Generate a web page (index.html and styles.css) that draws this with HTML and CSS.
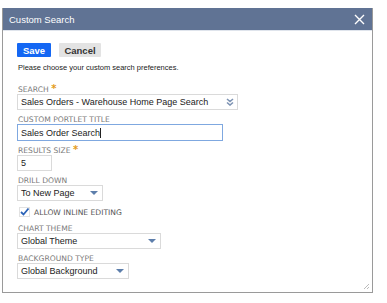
FILE: index.html
```html
<!DOCTYPE html>
<html lang="en">
<head>
    <meta charset="UTF-8">
    <title>Custom Search</title>
    <link rel="stylesheet" href="styles.css">
</head>
<body>
    <!-- Dialogo -->
    <div class="dialog">
        <div class="dialog-header">
            <span class="dialog-title">Custom Search</span>
            <svg class="close" width="11" height="11" viewBox="0 0 11 11">
                <path d="M1 1 L10 10 M10 1 L1 10" stroke="#fff" stroke-width="1.4"/>
            </svg>
        </div>

        <div class="dialog-body">
            <div class="actions">
                <button class="btn btn-save">Save</button>
                <button class="btn btn-cancel">Cancel</button>
            </div>
            <p class="intro">Please choose your custom search preferences.</p>

            <div class="field">
                <label>SEARCH <span class="req">*</span></label>
                <div class="select select-search">
                    <span>Sales Orders - Warehouse Home Page Search</span>
                    <svg width="8" height="8" viewBox="0 0 8 8">
                        <path d="M1 1 L4 3.5 L7 1 M1 4.5 L4 7 L7 4.5" fill="none" stroke="#7d93b3" stroke-width="1.6"/>
                    </svg>
                </div>
            </div>

            <div class="field">
                <label>CUSTOM PORTLET TITLE</label>
                <div class="input input-title">Sales Order Search<span class="caret"></span></div>
            </div>

            <div class="field">
                <label>RESULTS SIZE <span class="req">*</span></label>
                <div class="input input-size">5</div>
            </div>

            <div class="field">
                <label>DRILL DOWN</label>
                <div class="select select-drill">
                    <span>To New Page</span>
                    <i class="arrow"></i>
                </div>
            </div>

            <div class="check-row">
                <svg width="11" height="10" viewBox="0 0 11 10">
                    <rect x="0.5" y="0.5" width="10" height="9" fill="none" stroke="#e2e2e2"/>
                    <path d="M2 5 L4.5 7.5 L9.5 1.5" fill="none" stroke="#2d64b8" stroke-width="1.8"/>
                </svg>
                <span>ALLOW INLINE EDITING</span>
            </div>

            <div class="field">
                <label>CHART THEME</label>
                <div class="select select-chart">
                    <span>Global Theme</span>
                    <i class="arrow"></i>
                </div>
            </div>

            <div class="field">
                <label>BACKGROUND TYPE</label>
                <div class="select select-bg">
                    <span>Global Background</span>
                    <i class="arrow"></i>
                </div>
            </div>
        </div>

        <svg class="grip" width="7" height="7" viewBox="0 0 7 7">
            <path d="M6 1 L1 6 M6 4 L4 6" stroke="#aaa" stroke-width="0.8"/>
        </svg>
    </div>
</body>
</html>
```

FILE: styles.css
```css
body {
    margin: 0;
    background-color: #fff;
    font-family: "Liberation Sans", Arial, sans-serif;
}

.dialog {
    position: relative;
    width: 369px;
    height: 284px;
    margin: 8px 0 0 2px;
    border: 1px solid #9a9a9a;
    border-top: none;
}

.dialog-header {
    height: 22px;
    background-color: #607394;
    display: flex;
    align-items: center;
    justify-content: space-between;
    padding: 0 7px 0 6px;
    border-bottom: 1px solid #dfe4ec;
}

.dialog-title {
    color: #fff;
    font-size: 9.5px;
}

.dialog-body {
    display: flex;
    flex-direction: column;
    align-items: flex-start;
    padding: 12px 0 0 14px;
}

.actions {
    display: flex;
    gap: 8px;
}

.btn {
    height: 14px;
    border: none;
    border-radius: 1px;
    font-family: "Liberation Sans", Arial, sans-serif;
    font-size: 9.5px;
    font-weight: bold;
    padding: 0;
}

.btn-save {
    width: 34px;
    background-color: #1467f3;
    color: #fff;
}

.btn-cancel {
    width: 42px;
    background-color: #e3e3e3;
    color: #333;
}

.intro {
    margin: 6px 0 8px 1px;
    font-size: 7.5px;
    line-height: 9px;
    color: #222;
}

.field {
    margin-top: 6px;
}

.field label {
    display: block;
    height: 8px;
    overflow: visible;
    font-family: "DejaVu Sans", Verdana, sans-serif;
    font-size: 7.6px;
    color: #7a7a7a;
    margin: 0 0 0 1px;
    line-height: 8px;
    white-space: nowrap;
}

.req {
    color: #e39b1b;
    font-size: 10px;
    font-weight: bold;
    line-height: 0;
}

.select,
.input {
    box-sizing: border-box;
    height: 16px;
    border: 1px solid #dadada;
    display: flex;
    align-items: center;
    justify-content: space-between;
    padding: 0 4px 0 3px;
    font-size: 9px;
    color: #222;
}

.select-search {
    width: 221px;
    padding-right: 3px;
}
.select-drill { width: 86px; }
.select-chart { width: 144px; }
.select-bg { width: 112px; }

.input-title {
    width: 206px;
    height: 17px;
    border: 1px solid #7fa8e0;
    justify-content: flex-start;
}

.input-size {
    width: 35px;
    justify-content: flex-start;
}

.caret {
    display: inline-block;
    width: 1px;
    height: 10px;
    background-color: #222;
}

.arrow {
    width: 0;
    height: 0;
    border-left: 4px solid transparent;
    border-right: 4px solid transparent;
    border-top: 4px solid #5d7eab;
}

.check-row {
    display: flex;
    align-items: center;
    gap: 4px;
    margin: 6px 0 2px 2px;
    font-family: "DejaVu Sans", Verdana, sans-serif;
    font-size: 7.6px;
    color: #555;
}

.grip {
    position: absolute;
    right: 2px;
    bottom: 2px;
}
```
